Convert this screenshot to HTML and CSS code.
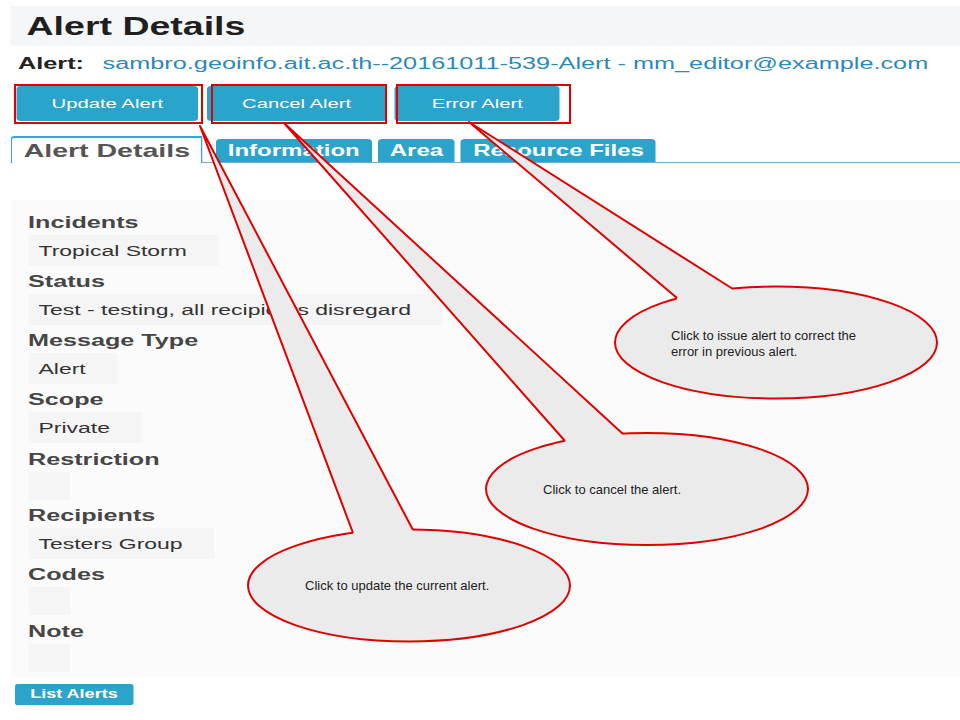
FILE: index.html
```html
<!DOCTYPE html>
<html lang="en">
<head>
    <meta charset="UTF-8">
    <meta name="viewport" content="width=device-width, initial-scale=1.0">
    <title>Alert Details</title>
    <link rel="stylesheet" href="styles.css">
</head>
<body>

    <!-- the screenshot under the notes is stretched wide, so the page is drawn at 640px and scaled -->
    <div class="page">
        <div class="title-bar">
            <h1>Alert Details</h1>
        </div>

        <div class="alert-line">
            <span class="alert-label">Alert:</span>
            <a class="alert-link" href="#">sambro.geoinfo.ait.ac.th--20161011-539-Alert - mm_editor@example.com</a>
        </div>

        <div class="actions">
            <button class="btn">Update Alert</button>
            <button class="btn">Cancel Alert</button>
            <button class="btn btn-error">Error Alert</button>
        </div>

        <ul class="tabs">
            <li class="tab active">Alert Details</li>
            <li class="tab">Information</li>
            <li class="tab">Area</li>
            <li class="tab">Resource Files</li>
        </ul>

        <div class="panel">
            <div class="field-label first">Incidents</div>
            <div class="field-value">Tropical Storm</div>

            <div class="field-label">Status</div>
            <div class="field-value">Test - testing, all recipients disregard</div>

            <div class="field-label">Message Type</div>
            <div class="field-value">Alert</div>

            <div class="field-label">Scope</div>
            <div class="field-value">Private</div>

            <div class="field-label">Restriction</div>
            <div class="field-value"></div>

            <div class="field-label">Recipients</div>
            <div class="field-value">Testers Group</div>

            <div class="field-label">Codes</div>
            <div class="field-value"></div>

            <div class="field-label">Note</div>
            <div class="field-value"></div>
        </div>

        <button class="list-btn">List Alerts</button>
    </div>

    <!-- Help notes drawn over the page -->
    <svg class="notes" width="960" height="720" viewBox="0 0 960 720">
        <g fill="none" stroke="#e10000" stroke-width="2">
            <rect x="15" y="85" width="187" height="38"/>
            <rect x="212" y="85" width="174" height="38"/>
            <rect x="397" y="85" width="173" height="38"/>
        </g>

        <!-- error alert note -->
        <ellipse cx="776" cy="342.5" rx="161" ry="56" fill="#ebebeb" stroke="#e10000" stroke-width="2"/>
        <polygon points="469,122 677,298 677,305 733,296 733,289" fill="#ebebeb"/>
        <polyline points="677,298 469,122 733,289" fill="none" stroke="#e10000" stroke-width="2" stroke-linejoin="round"/>
        <text class="note-text" x="671" y="340">Click to issue alert to correct the</text>
        <text class="note-text" x="671" y="355.5">error in previous alert.</text>

        <!-- cancel alert note -->
        <ellipse cx="647" cy="489" rx="161" ry="56" fill="#ebebeb" stroke="#e10000" stroke-width="2"/>
        <polygon points="284,123 565,441 565,448 623,441 623,434" fill="#ebebeb"/>
        <polyline points="565,441 284,123 623,434" fill="none" stroke="#e10000" stroke-width="2" stroke-linejoin="round"/>
        <text class="note-text" x="543" y="493.5">Click to cancel the alert.</text>

        <!-- update alert note -->
        <ellipse cx="409" cy="585.5" rx="161" ry="56" fill="#ebebeb" stroke="#e10000" stroke-width="2"/>
        <polygon points="200,126 353,533 353,540 413,537 413,530" fill="#ebebeb"/>
        <polyline points="353,533 200,126 413,530" fill="none" stroke="#e10000" stroke-width="2" stroke-linejoin="round"/>
        <text class="note-text" x="305" y="590">Click to update the current alert.</text>
    </svg>

</body>
</html>
```

FILE: styles.css
```css
html, body {
    margin: 0;
    padding: 0;
    overflow: hidden;
}

body {
    position: relative;
    width: 960px;
    height: 720px;
    background: #fff;
    font-family: 'Liberation Sans', Arial, sans-serif;
    color: #333;
}

.page {
    width: 640px;
    padding-top: 6px;
    transform: scaleX(1.5);
    transform-origin: 0 0;
}

.title-bar {
    margin-left: 6.7px;
    height: 40px;
    background-color: #f5f6f8;
}

h1 {
    margin: 0;
    padding-left: 11px;
    font-size: 25px;
    line-height: 40px;
    font-weight: bold;
    color: #1f1f1f;
}

.alert-line {
    margin: 6px 0 0 12px;
    font-size: 16.85px;
    line-height: 24px;
    white-space: nowrap;
}

.alert-label {
    font-weight: bold;
    color: #222;
    margin-right: 7.7px;
}

.alert-link {
    color: #2d89b7;
    text-decoration: none;
}

.actions {
    display: flex;
    gap: 5.3px;
    margin: 10px 0 0 10.7px;
}

.btn {
    height: 35px;
    padding: 0 23.7px;
    border: none;
    border-radius: 3px;
    background-color: #2ba4cb;
    color: #fff;
    font-family: 'Liberation Sans', Arial, sans-serif;
    font-size: 13.5px;
    line-height: 35px;
    cursor: pointer;
}

.btn-error {
    padding: 0 24.7px;
}

.tabs {
    display: flex;
    align-items: flex-end;
    gap: 4px;
    list-style: none;
    margin: 15px 0 0 6.7px;
    padding: 0 0 0 0.6px;
    height: 26px;
    border-bottom: 1px solid #6ab2cc;
}

.tab {
    height: 23px;
    padding: 0 8px;
    border-radius: 3px 3px 0 0;
    background-color: #2ba4cb;
    color: #fff;
    font-size: 16px;
    font-weight: bold;
    line-height: 23px;
    white-space: nowrap;
}

.tab.active {
    height: 25px;
    margin-bottom: -1px;
    margin-right: 4.7px;
    padding: 0 7.5px;
    border: 2px solid #34a6cc;
    border-width: 2px 1.4px 0;
    border-radius: 3px 0 0 0;
    background-color: #fff;
    color: #555;
    font-size: 19px;
    line-height: 25px;
}

.panel {
    margin: 37px 0 0 6.7px;
    padding: 12.5px 12px 5px;
    background-color: #fbfbfb;
}

.field-label {
    margin: 6.3px 0 2px;
    font-size: 16.8px;
    font-weight: bold;
    line-height: 20px;
    color: #464646;
}

.field-label.first {
    margin-top: 0;
}

.field-value {
    box-sizing: border-box;
    width: fit-content;
    min-height: 28px;
    padding: 6px 21px 6px 7px;
    background-color: #f5f5f5;
    font-size: 15.3px;
    line-height: 19px;
    color: #333;
    white-space: nowrap;
}

.list-btn {
    display: block;
    margin: 7.5px 0 0 9.7px;
    height: 21px;
    padding: 0 10.5px 1px;
    border: none;
    border-radius: 2px;
    background-color: #2ba4cb;
    color: #fff;
    font-family: 'Liberation Sans', Arial, sans-serif;
    font-size: 12px;
    font-weight: bold;
    line-height: 18px;
}

.notes {
    position: absolute;
    top: 0;
    left: 0;
    pointer-events: none;
}

.note-text {
    font-family: 'Liberation Sans', Arial, sans-serif;
    font-size: 13px;
    fill: #222;
}
```
